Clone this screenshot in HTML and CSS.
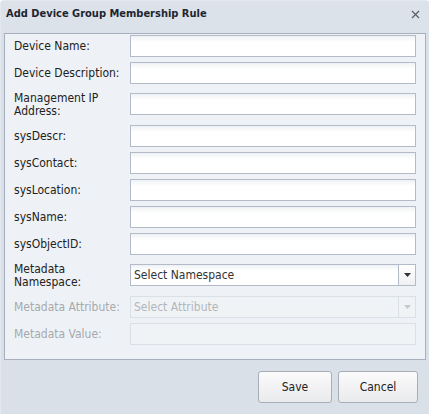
FILE: index.html
```html
<!DOCTYPE html>
<html>
<head>
<meta charset="utf-8">
<link rel="stylesheet" href="styles.css">
</head>
<body>
<div class="window">
  <div class="titlebar">
    <span class="title">Add Device Group Membership Rule</span>
    <svg class="close" width="9" height="9" viewBox="0 0 9 9"><path d="M1 1 L8 8 M8 1 L1 8" stroke="#5a5f66" stroke-width="1.2" fill="none"/></svg>
  </div>
  <div class="panel">
    <div class="row"><label class="lbl">Device Name:</label><div class="field"><input class="txt" type="text"></div></div>
    <div class="row"><label class="lbl">Device Description:</label><div class="field"><input class="txt" type="text"></div></div>
    <div class="row tall"><label class="lbl">Management IP Address:</label><div class="field"><input class="txt" type="text"></div></div>
    <div class="row"><label class="lbl">sysDescr:</label><div class="field"><input class="txt" type="text"></div></div>
    <div class="row"><label class="lbl">sysContact:</label><div class="field"><input class="txt" type="text"></div></div>
    <div class="row"><label class="lbl">sysLocation:</label><div class="field"><input class="txt" type="text"></div></div>
    <div class="row"><label class="lbl">sysName:</label><div class="field"><input class="txt" type="text"></div></div>
    <div class="row"><label class="lbl">sysObjectID:</label><div class="field"><input class="txt" type="text"></div></div>
    <div class="row tall"><label class="lbl">Metadata Namespace:</label>
      <div class="field combo"><span class="combo-text">Select Namespace</span><span class="trigger"><svg width="7" height="4" viewBox="0 0 7 4"><path d="M0 0 H7 L3.5 4 Z" fill="#333"/></svg></span></div>
    </div>
    <div class="row disabled"><label class="lbl">Metadata Attribute:</label>
      <div class="field combo"><span class="combo-text">Select Attribute</span><span class="trigger"><svg width="7" height="4" viewBox="0 0 7 4"><path d="M0 0 H7 L3.5 4 Z" fill="#c4c8cd"/></svg></span></div>
    </div>
    <div class="row disabled"><label class="lbl">Metadata Value:</label><div class="field"><div class="txt dis"></div></div></div>
  </div>
  <div class="footer">
    <button class="btn save">Save</button>
    <button class="btn cancel">Cancel</button>
  </div>
</div>
</body>
</html>
```
FILE: styles.css
```css
html, body {
  margin: 0;
  padding: 0;
  background: #ffffff;
}
body {
  font-family: "DejaVu Sans Condensed", "DejaVu Sans", sans-serif;
  font-size: 12px;
  color: #222;
}
.window {
  width: 429px;
  height: 414px;
  box-sizing: border-box;
  background: #d9e0e8;
  border-radius: 4px 4px 0 0;
  border-left: 1px solid #e3e8ee;
  border-top: 1px solid #e3e8ee;
  display: flex;
  flex-direction: column;
}
.titlebar {
  height: 32px;
  display: flex;
  align-items: center;
  justify-content: space-between;
  padding: 0 7px 0 5px;
  background: #dce2ea;
}
.title {
  font-weight: bold;
  font-size: 11px;
  color: #1e2530;
  margin-top: -7px;
}
.close {
  margin-top: -6px;
  margin-right: 2px;
}
.panel {
  margin: 0 3px 0 3px;
  height: 327px;
  box-sizing: border-box;
  border: 1px solid #a7afbe;
  background: #eef2f6;
  padding: 1px 9px 0 9px;
  display: flex;
  flex-direction: column;
  gap: 5px;
}
.row {
  display: flex;
  align-items: center;
  height: 22px;
}
.row.tall {
  height: 31px;
  align-items: flex-start;
}
.lbl {
  width: 116px;
  flex: none;
  line-height: 14px;
  color: #222;
}
.row.tall .lbl {
  padding-top: 3px;
  line-height: 13px;
}
.row.tall .field {
  margin-top: 4px;
}
.field {
  flex: 1;
  height: 22px;
}
.txt {
  display: block;
  width: 100%;
  height: 22px;
  box-sizing: border-box;
  margin: 0;
  border: 1px solid #b3bac8;
  background: linear-gradient(#eef1f4, #ffffff 6px);
  font: inherit;
  outline: none;
}
.txt.dis {
  border-color: #dbe0e6;
  background: #f0f3f6;
}
.combo {
  display: flex;
  box-sizing: border-box;
  border: 1px solid #b3bac8;
  background: linear-gradient(#eef1f4, #ffffff 6px);
}
.combo-text {
  flex: 1;
  line-height: 20px;
  padding-left: 3px;
  color: #333;
}
.trigger {
  width: 16px;
  border-left: 1px solid #b3bac8;
  background: linear-gradient(#ffffff, #eef0f3);
  display: flex;
  align-items: center;
  justify-content: center;
}
.row.disabled .lbl {
  color: #a6a9ad;
}
.row.disabled .combo {
  border-color: #dbe0e6;
  background: #f0f3f6;
}
.row.disabled .combo-text {
  color: #b3b6ba;
}
.row.disabled .trigger {
  border-left-color: #dbe0e6;
  background: #f0f3f6;
}
.footer {
  display: flex;
  justify-content: flex-end;
  gap: 6px;
  padding: 11px 11px 0 0;
}
.btn {
  height: 32px;
  box-sizing: border-box;
  border: 1px solid #a9aeb6;
  border-radius: 3px;
  background: linear-gradient(#fbfbfc, #e9eaec);
  font: inherit;
  color: #222;
  padding: 0;
}
.btn.save {
  width: 74px;
}
.btn.cancel {
  width: 80px;
}
```
